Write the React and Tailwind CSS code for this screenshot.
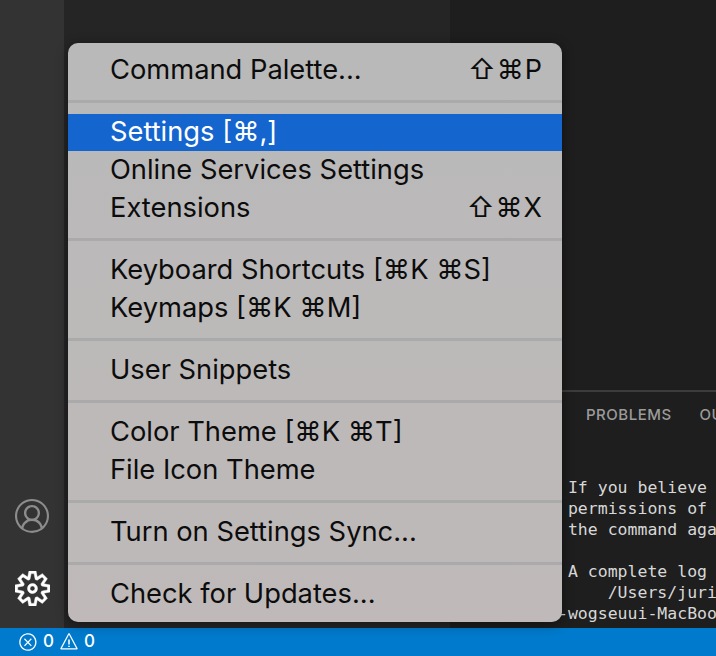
import { VscAccount, VscSettingsGear, VscError, VscWarning } from 'react-icons/vsc'

const groups = [
  [{ label: 'Command Palette...', keys: '⇧⌘P' }],
  [
    { label: 'Settings [⌘,]', active: true },
    { label: 'Online Services Settings' },
    { label: 'Extensions', keys: '⇧⌘X' },
  ],
  [{ label: 'Keyboard Shortcuts [⌘K ⌘S]' }, { label: 'Keymaps [⌘K ⌘M]' }],
  [{ label: 'User Snippets' }],
  [{ label: 'Color Theme [⌘K ⌘T]' }, { label: 'File Icon Theme' }],
  [{ label: 'Turn on Settings Sync...' }],
  [{ label: 'Check for Updates...' }],
]

function MenuRow({ label, keys, active }) {
  return (
    <div
      className={
        active
          ? 'flex h-[37.7px] items-center justify-between bg-[#1565cf] pl-[42px] pr-[19px] text-white'
          : 'flex h-[37.7px] items-center justify-between pl-[42px] pr-[19px] text-[#0c0c0c]'
      }
    >
      <span>{label}</span>
      {keys && <span className="text-[27px] tracking-[1px]">{keys}</span>}
    </div>
  )
}

function Menu() {
  return (
    <div className="absolute left-[68px] top-[43px] w-[494px] overflow-hidden rounded-[10px] bg-gradient-to-b from-[#b9b9b9] to-[#bfb9b9] pb-[8px] pt-[8.5px] font-['Inter','DejaVu_Sans',sans-serif] text-[27.3px] shadow-[0_2px_12px_rgba(0,0,0,0.45)]">
      {groups.map((rows, i) => (
        <div key={i}>
          {i > 0 && (
            <div className="flex h-[24.6px] items-center">
              <div className="h-[3px] w-full bg-[#aaaaaa]" />
            </div>
          )}
          {rows.map((row) => (
            <MenuRow key={row.label} {...row} />
          ))}
        </div>
      ))}
    </div>
  )
}

export default function App() {
  return (
    <div className="relative flex h-[656px] w-[716px] flex-col overflow-hidden bg-[#1e1e1e] font-['Inter',sans-serif]">
      <div className="flex min-h-0 flex-1">
        <div className="flex w-16 shrink-0 flex-col items-center justify-end gap-[38px] bg-[#333333] pb-[22px]">
          <VscAccount className="h-[34px] w-[34px] text-[#8c8c8c]" />
          <VscSettingsGear className="h-[35px] w-[35px] text-white" stroke="currentColor" strokeWidth="0.35" />
        </div>
        <div className="w-[386px] shrink-0 bg-[#252526]" />
        <div className="flex min-w-0 flex-1 flex-col">
          <div className="flex-1 bg-[#1e1e1e]" />
          <div className="h-[238px] shrink-0 overflow-hidden border-t-2 border-[#3c3c3c] bg-[#1e1e1e] pl-[108px]">
            <div className="flex gap-[28px] pl-[28px] pt-[12px] text-[15px] font-medium tracking-[0.5px] text-[#9b9b9b]">
              <span>PROBLEMS</span>
              <span>OUTPUT</span>
            </div>
            <pre className="mt-[50px] font-['DejaVu_Sans_Mono',monospace] text-[16.5px] leading-[21px] text-[#d8d8d8]">
              {' If you believe\n permissions of\n the command aga\n\n A complete log\n     /Users/juri\n-wogseuui-MacBoo'}
            </pre>
          </div>
        </div>
      </div>
      <div className="flex h-[28px] items-center gap-[5px] bg-[#007acc] pl-[18px] text-[17px] font-medium text-white">
        <VscError className="h-[20px] w-[20px]" />
        <span>0</span>
        <VscWarning className="h-[20px] w-[20px]" />
        <span>0</span>
      </div>
      <Menu />
    </div>
  )
}
